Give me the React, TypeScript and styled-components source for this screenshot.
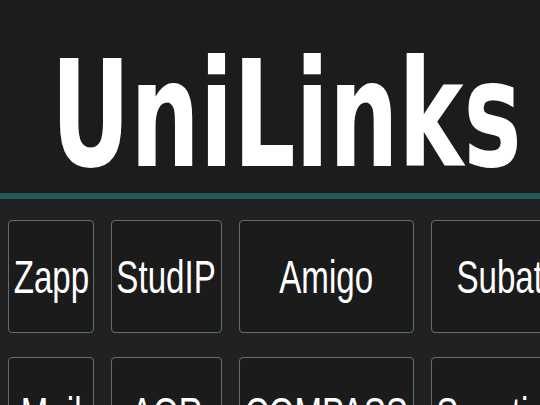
import { createGlobalStyle, styled } from "styled-components";

const GlobalStyle = createGlobalStyle`
  html, body {
    margin: 0;
    padding: 0;
    background-color: #212121;
    overflow: hidden;
  }
`;

const Page = styled.div`
  width: 540px;
  height: 405px;
  overflow: hidden;
  display: flex;
  flex-direction: column;
`;

const Header = styled.header`
  flex-shrink: 0;
  height: 199px;
  box-sizing: border-box;
  padding: 41px 0 0 51px;
  background-color: #1c1c1c;
  border-bottom: 6px solid #245858;
  overflow: hidden;
`;

const Title = styled.h1`
  margin: 0;
  display: inline-block;
  font-family: "DejaVu Sans", sans-serif;
  font-weight: bold;
  font-size: 148px;
  line-height: 148px;
  color: #ffffff;
  white-space: nowrap;
  transform: scaleX(0.66);
  transform-origin: left center;
`;

const LinkGrid = styled.div`
  flex-shrink: 0;
  display: grid;
  grid-template-columns: 86px 111px 175px 155px;
  grid-auto-rows: 113px;
  column-gap: 17px;
  row-gap: 24px;
  padding: 21px 0 0 8px;
`;

const LinkButton = styled.a`
  display: flex;
  align-items: center;
  justify-content: center;
  box-sizing: border-box;
  background-color: #1b1b1b;
  border: 1px solid #5a7272;
  border-radius: 4px;
  color: #ffffff;
  text-decoration: none;
  overflow: visible;
`;

const Label = styled.span`
  display: inline-block;
  font-family: "Liberation Sans", Arial, sans-serif;
  font-size: 46px;
  white-space: nowrap;
  transform: scaleX(0.72);
  transform-origin: center;
`;

const links = [
  "Zapp",
  "StudIP",
  "Amigo",
  "Subato",
  "Mail",
  "AOR",
  "COMPASS",
  "Sonstiges",
];

export default function App() {
  return (
    <>
      <GlobalStyle />
      <Page>
        <Header>
          <Title>UniLinks</Title>
        </Header>
        <LinkGrid>
          {links.map((name) => (
            <LinkButton key={name} href="#">
              <Label>{name}</Label>
            </LinkButton>
          ))}
        </LinkGrid>
      </Page>
    </>
  );
}
